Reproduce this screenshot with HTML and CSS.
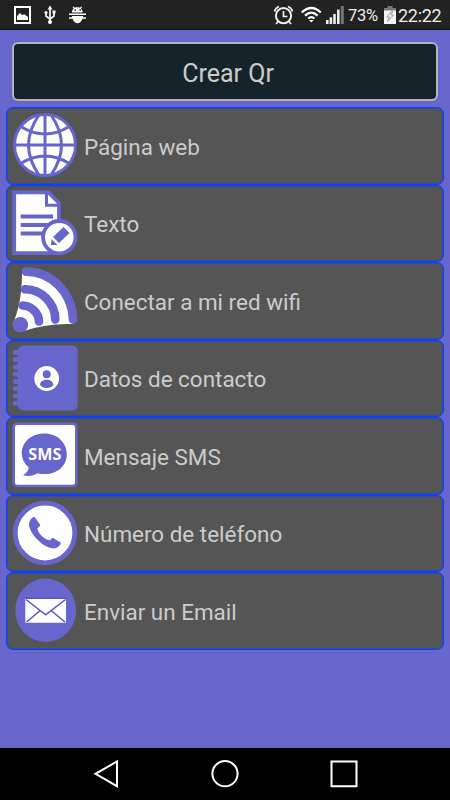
FILE: index.html
```html
<!DOCTYPE html>
<html lang="es">
<head>
<meta charset="utf-8">
<title>Crear Qr</title>
<link rel="stylesheet" href="styles.css">
</head>
<body>
<header class="status">
  <svg class="notices" width="90" height="30" viewBox="0 0 90 30">
    <path d="M15 7h15v16H15z" fill="none" stroke="#fff" stroke-width="2"/>
    <path d="M17 20v-4l3-3 2 2 1 0 1-1 4 3v3z" fill="#fff"/>
    <path d="M50 8v14M46 12v4l4 3 4-3v-4" fill="none" stroke="#eee" stroke-width="1.8"/>
    <path d="M47.500 9.500 50 5.500l2.500 4z" fill="#fff"/><circle cx="50" cy="22" r="2" fill="#fff"/><circle cx="46" cy="12.500" r="1.600" fill="#fff"/><path d="M52.500 10.500h3v3h-3z" fill="#fff"/>
    <path d="M72 12.500c0-2 .6-3 1.700-4L72.500 7l.8-.6 1.500 1.300c1.600-.6 3.400-.6 5 0l1.500-1.300.8.6-1.200 1.500c1.100 1 1.700 2 1.700 4zM69 13.500h17v1.600H69zM72 16h11v1.200h3v1.500h-3.500c-1 2.800-3 4.500-5 4.500s-4-1.700-5-4.500H69v-1.500h3z" fill="#fff"/>
    <path d="M74.500 10h1.500M79.500 10H81" stroke="#222" stroke-width="1.300"/>
  </svg>
  <svg class="signals" width="75" height="30" viewBox="0 0 75 30">
    <g fill="none" stroke="#eee"><circle cx="13.500" cy="15.700" r="7.600" stroke-width="2"/><path d="M13.500 11v5.500h4M4.500 11.500c.5-2.500 2-4 4.500-5M22.500 11.500c-.5-2.500-2-4-4.500-5M8.500 21l-2.500 3M18.500 21l2.500 3" stroke-width="1.700"/></g>
    <g fill="none" stroke="#fff" stroke-width="2.300"><path d="M31.800 12.500q9.500-9 19 0M35 15.600q6.300-6 12.600 0M38.200 18.500q3.100-2.800 6.200 0"/></g><path d="M39 20h4.600l-2.300 2.500z" fill="#fff"/>
    <path d="M56 20h2.600v4H56zM59.600 17.300h2.600V24h-2.600zM63.200 14h2.600v10h-2.600zM67 9.500h2.600V24H67z" fill="#eee"/><path d="M70.800 6h3v18h-3z" fill="#777"/>
  </svg>
  <span class="percent">73%</span>
  <svg class="battery" width="12" height="30" viewBox="0 0 12 30"><path d="M3.500 6h5v2H12v4H0V8h3.500z" fill="#777"/><path d="M0 10.500h12V24H0z" fill="#f5f5f5"/><path d="M7.500 11.500 2.800 17h2.700L3.500 21.500 9.500 15H6.800l2-3.500z" fill="none" stroke="#888" stroke-width=".8"/></svg>
  <span class="clock">22:22</span>
</header>
<main>
  <h1>Crear Qr</h1>
  <ul class="menu">
    <li><svg viewBox="0 0 66 66"><circle cx="33" cy="33" r="30.500" fill="#fff"/><g fill="none" stroke="#6666cc" stroke-width="3"><circle cx="33" cy="33" r="30.500"/><path d="M33 2v62M2 33h62M27 3Q6 33 27 63M39 3Q60 33 39 63M9.500 15Q33 29 56.500 15M9.500 51Q33 37 56.500 51"/></g></svg><span>Página web</span></li>
    <li><svg viewBox="0 0 66 66"><path d="M2.200 2.400H36.500L47 13v50.200H2.200z" fill="#fff" stroke="#6666cc" stroke-width="3.800"/><path d="M34.500 3v12.200H47" fill="none" stroke="#6666cc" stroke-width="3"/><path d="M8.700 26.500H41M8.700 35H37M8.700 43.400H32" stroke="#6666cc" stroke-width="4"/><circle cx="47.300" cy="47.200" r="16.200" fill="#fff" stroke="#6666cc" stroke-width="3.800"/><path d="M41 47 51.500 37l6 6L47 53zM39.500 49l6 6h-6.500z" fill="#6666cc"/></svg><span>Texto</span></li>
    <li><svg viewBox="0 0 66 66"><path d="M10 2Q10.500 36 .6 57L10 64.500Q34 56 61 57Q55 12 12 4z" fill="#fff"/><g fill="none" stroke="#6666cc" stroke-width="8.600" stroke-linecap="round"><path d="M14 4.600C39 4.500 60 25 61 52.500M13 22.300C29 22 43.300 36 43.300 52.500M10.700 38.500C19 38.500 27 46 27 54.500"/></g><circle cx="8.300" cy="57.700" r="7.800" fill="#6666cc"/></svg><span>Conectar a mi red wifi</span></li>
    <li><svg viewBox="0 0 66 66"><rect x="5.700" y=".5" width="60" height="65" rx="5.500" fill="#6666cc"/><path d="M3 7.500h5M3 14.700h5M3 22h5M3 29.200h5M3 36.500h5M3 43.700h5M3 51h5M3 58.200h5" stroke="#6666cc" stroke-width="4.800" stroke-linecap="round"/><circle cx="34.700" cy="33.500" r="12.400" fill="#fff"/><circle cx="34.700" cy="29.200" r="4" fill="#6666cc"/><path d="M28 40c0-3.500 3.300-5.300 6.700-5.300s6.700 1.800 6.700 5.300c-3 4-10.400 4-13.400 0z" fill="#6666cc"/></svg><span>Datos de contacto</span></li>
    <li><svg viewBox="0 0 66 66"><rect x="1.700" y="1.700" width="62.600" height="62.300" rx="3.500" fill="#fff" stroke="#6666cc" stroke-width="2.600"/><path d="M32.300 11.400C19 11.400 9.800 20.500 9.800 31c0 6 2.500 10.500 6.700 14 .5 3-2 6-5.300 8.200 5 1.600 11 .4 14.300-2C42 55 54.800 46 54.800 32c0-11-9-20.600-22.500-20.600z" fill="#6666cc"/><text x="16.300" y="38" textLength="33" lengthAdjust="spacingAndGlyphs" class="sms">SMS</text></svg><span>Mensaje SMS</span></li>
    <li><svg viewBox="0 0 66 66"><circle cx="33" cy="33" r="29.800" fill="#fff" stroke="#6666cc" stroke-width="4.800"/><path d="M22.500 16.800 28 24.500c.5 1-.2 2-2.500 3.500 0 5 7 12 12.700 12.200 1.300-2.200 2.500-2.500 3.800-1.700l7 4.300c-.5 2.700-3.200 5-6.500 5.700C31 48.500 17.500 33 17 25c0-4 2.500-7.500 5.500-8.200z" fill="#6666cc"/></svg><span>Número de teléfono</span></li>
    <li><svg viewBox="0 0 66 66"><ellipse cx="33.700" cy="33.300" rx="30.500" ry="31.700" fill="#6666cc"/><path d="M13.300 21h40.700v24.700H13.300z" fill="#fff"/><path d="M13.300 21.300H54M14 22.500l19.600 15.300L53.500 22.500M14.500 45l13.800-11.500M53 45 39 33.500" fill="none" stroke="#5555c4" stroke-width="1.500"/></svg><span>Enviar un Email</span></li>
  </ul>
</main>
<nav>
  <svg viewBox="0 0 450 52" width="450" height="52" fill="none" stroke="#fff" stroke-width="2"><path d="M117 13.500v24.700L95.500 25.800z"/><circle cx="225" cy="25.700" r="12.600"/><path d="M331.500 13.500h25v24.700h-25z"/></svg>
</nav>
</body>
</html>
```

FILE: styles.css
```css
* { box-sizing: border-box; }
body { margin: 0; height: 800px; display: flex; flex-direction: column; background: #6666cc; font-family: Roboto, sans-serif; overflow: hidden; }
svg { display: block; flex: none; }
.status { height: 30px; display: flex; align-items: center; background: #222; border-bottom: 1px solid #111; color: #eee; white-space: nowrap; }
.signals { margin-left: 180px; }
.percent { width: 35px; padding-left: 3px; font-size: 16.5px; line-height: 30px; padding-top: 2px; letter-spacing: -.3px; }
.battery { margin-left: 4px; }
.clock { margin-left: 2px; font-size: 18px; line-height: 30px; padding-top: 2px; letter-spacing: -.3px; }
main { flex: 1; padding: 12px 6px 0; }
h1 { margin: 0 6px 6px; padding-left: 6px; height: 59px; border: 2px solid #b4b4b8; border-radius: 6px; background: #15232b; color: #ccc; font-size: 25px; font-weight: 400; line-height: 60px; text-align: center; }
.menu { list-style: none; margin: 0; padding: 0; }
.menu li { height: 77.5px; display: flex; align-items: center; gap: 6px; padding: 0 0 1px 5px; border: 1px solid #0b40ff; border-radius: 7px; background: #555; box-shadow: inset 0 0 0 1px rgba(11, 64, 255, .45); color: #ccc; font-size: 22.45px; white-space: nowrap; }
.menu svg { width: 66px; height: 66px; }
.menu span { padding-top: 3px; }
.sms { font: 700 15.5px "Open Sans", sans-serif; fill: #fff; }
nav { height: 52px; background: #000; }
```
